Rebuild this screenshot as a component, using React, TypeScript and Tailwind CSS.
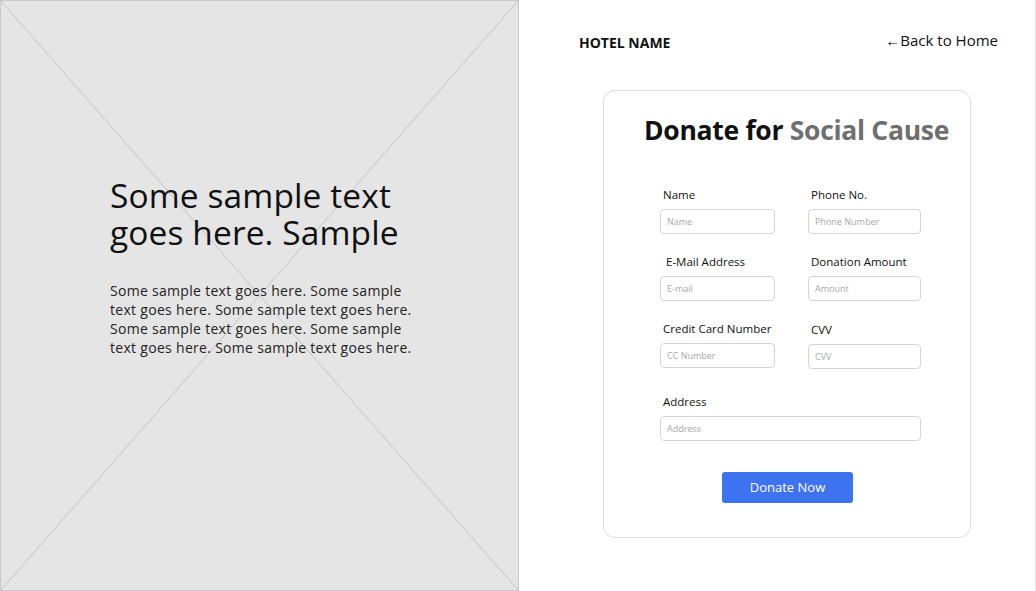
import React from 'react';

const font = { fontFamily: '"Open Sans", "Liberation Sans", sans-serif' };

function Field({ label, placeholder, labelClass = 'ml-[3px]' }: { label: string; placeholder: string; labelClass?: string }) {
  return (
    <div>
      <p className={`whitespace-nowrap text-[11.5px] font-medium text-[#111] leading-[16px] ${labelClass}`}>{label}</p>
      <input
        placeholder={placeholder}
        className="mt-[6px] h-[25px] w-full rounded-[4px] border border-[#d4d4d4] bg-white px-[6px] text-[9px] text-[#333] placeholder:text-[#a8a8a8] outline-none"
      />
    </div>
  );
}

export default function App() {
  return (
    <div className="flex w-[1036px] h-[591px] bg-white overflow-hidden" style={font}>
      {/* Image placeholder */}
      <div className="relative w-[519px] h-[591px] shrink-0 bg-[#e5e5e5] border border-[#c9c9c9]">
        <svg className="absolute inset-0 w-full h-full" viewBox="0 0 517 589" preserveAspectRatio="none">
          <line x1="0" y1="0" x2="517" y2="589" stroke="#c4c4c4" strokeWidth="1" />
          <line x1="517" y1="0" x2="0" y2="589" stroke="#c4c4c4" strokeWidth="1" />
        </svg>
        <div className="relative pl-[109px] pt-[176px]">
          <h1 className="text-[33.5px] leading-[37px] font-medium text-[#111] tracking-[0.1px] w-[330px]">
            Some sample text goes here. Sample
          </h1>
          <p className="mt-[30px] w-[312px] text-[14px] leading-[19px] tracking-[0.3px] text-[#222]">
            Some sample text goes here. Some sample text goes here. Some sample text goes here. Some sample text goes here. Some sample text goes here. Some sample text goes here.
          </p>
        </div>
      </div>

      {/* Form side */}
      <div className="flex-1 border-r border-[#e3e3e3]">
        <div className="flex items-start justify-between pl-[60px] pr-[37px] pt-[30px]">
          <span className="mt-[3px] text-[14px] leading-[20px] font-bold text-[#111]">HOTEL NAME</span>
          <a className="text-[15px] leading-[20px] text-[#111]">←Back to Home</a>
        </div>

        <div className="ml-[84px] mt-[37px] w-[368px] h-[448px] rounded-[12px] border border-[#dcdcdc] bg-white">
          <h2 className="pl-[40px] pt-[22px] text-[26.5px] leading-[34px] font-bold text-[#111] tracking-[-0.3px] whitespace-nowrap">
            Donate for <span className="text-[#6f6f6f]">Social Cause</span>
          </h2>
          <div className="ml-[56px] mt-[40px] grid grid-cols-[115px_113px] gap-x-[33px] gap-y-[20px]">
            <Field label="Name" placeholder="Name" />
            <Field label="Phone No." placeholder="Phone Number" />
            <Field label="E-Mail Address" placeholder="E-mail" labelClass="ml-[6px]" />
            <Field label="Donation Amount" placeholder="Amount" />
            <Field label="Credit Card Number" placeholder="CC Number" />
            <div className="mt-[1px]">
              <Field label="CVV" placeholder="CVV" />
            </div>
            <div className="col-span-2 mt-[5px]">
              <Field label="Address" placeholder="Address" />
            </div>
          </div>
          <div className="flex justify-center mt-[31px] pl-[1px]">
            <button className="w-[131px] h-[31px] rounded-[3px] bg-[#3e73ef] text-[13px] text-white">Donate Now</button>
          </div>
        </div>
      </div>
    </div>
  );
}
